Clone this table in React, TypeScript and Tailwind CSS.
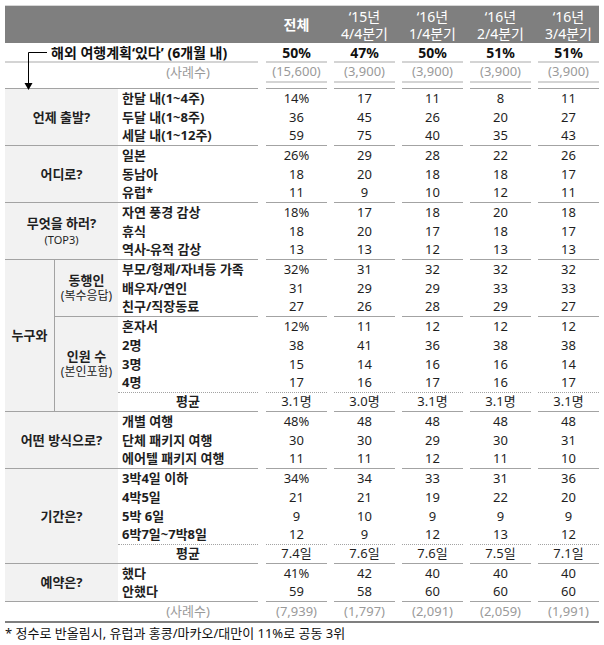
import React from "react";

type Line = "none" | "solid" | "dotted" | "light";

const lineCls = (l: Line) =>
  l === "solid"
    ? "border-b border-[#a3a3a3]"
    : l === "dotted"
    ? "border-b border-dotted border-[#a3a3a3]"
    : l === "light"
    ? "border-b-2 border-[#d4d4d4]"
    : "";

const heads = [
  { a: "‘15년", b: "4/4분기" },
  { a: "‘16년", b: "1/4분기" },
  { a: "‘16년", b: "2/4분기" },
  { a: "‘16년", b: "3/4분기" },
];

type RowDef = { label: string; v: string[]; center?: boolean };

const Row = ({ r, line }: { r: RowDef; line: Line }) => (
  <div className="flex h-[19px]">
    <div
      className={`w-[140px] flex items-center font-bold text-[13px] text-[#1f1f1f] ${
        r.center ? "justify-center" : "pl-[4px]"
      } ${lineCls(line)}`}
    >
      {r.label}
    </div>
    <div className="w-[8px]" />
    <div className="flex gap-[7px]">
      {r.v.map((x, i) => (
        <div
          key={i}
          className={`w-[61px] flex items-center justify-center text-[13px] text-[#1f1f1f] ${lineCls(line)}`}
        >
          {x}
        </div>
      ))}
    </div>
  </div>
);

const Rows = ({ rows, dottedBeforeLast }: { rows: RowDef[]; dottedBeforeLast?: boolean }) => (
  <div className="flex flex-col">
    {rows.map((r, i) => {
      let line: Line = "none";
      if (i === rows.length - 1) line = "solid";
      else if (dottedBeforeLast && i === rows.length - 2) line = "dotted";
      return <Row key={i} r={r} line={line} />;
    })}
  </div>
);

const Group = ({
  title,
  sub,
  rows,
  dotted,
}: {
  title: string;
  sub?: string;
  rows: RowDef[];
  dotted?: boolean;
}) => (
  <div className="flex">
    <div className="w-[113px] bg-[#f2f2f2] border-b border-[#a3a3a3] flex flex-col items-center justify-center text-[#1f1f1f]">
      <div className="font-bold text-[13px] leading-[17px]">{title}</div>
      {sub && <div className="text-[11px] leading-[15px]">{sub}</div>}
    </div>
    <Rows rows={rows} dottedBeforeLast={dotted} />
  </div>
);

const SubGroup = ({
  title,
  sub,
  rows,
  dotted,
}: {
  title: string;
  sub: string;
  rows: RowDef[];
  dotted?: boolean;
}) => (
  <div className="flex">
    <div className="w-[63px] bg-[#f2f2f2] border-b border-[#a3a3a3] flex flex-col items-center justify-center text-[#1f1f1f]">
      <div className="font-bold text-[13px] leading-[16px]">{title}</div>
      <div className="text-[12px] leading-[16px]">{sub}</div>
    </div>
    <Rows rows={rows} dottedBeforeLast={dotted} />
  </div>
);

export default function App() {
  return (
    <div className="relative w-[604px] h-[645px] bg-white px-[5px] pt-[5px] font-['Noto_Sans','Noto_Sans_CJK_KR',sans-serif]">
      <svg className="absolute left-0 top-0" width="60" height="95">
        <path d="M28.5 52.5H47M28.5 52.5V84" stroke="#000" strokeWidth="1" fill="none" />
        <path d="M24.5 83L32.5 83L28.5 90Z" fill="#000" />
      </svg>

      {/* header */}
      <div className="flex h-[38px] bg-[#7f7f7f] border-t border-[#d6d6d6] text-white">
        <div className="w-[261px]" />
        <div className="flex gap-[7px]">
          <div className="w-[61px] flex items-center justify-center font-bold text-[14px]">전체</div>
          {heads.map((h, i) => (
            <div key={i} className="w-[61px] flex flex-col items-center justify-center text-[14px] leading-[17px]">
              <div>{h.a}</div>
              <div>{h.b}</div>
            </div>
          ))}
        </div>
      </div>

      {/* 해외 여행계획 */}
      <div className="flex h-[20px]">
        <div className={`w-[253px] flex items-center pl-[46px] font-bold text-[14px] text-[#111] ${lineCls("light")}`}>
          해외 여행계획‘있다’ (6개월 내)
        </div>
        <div className="w-[8px]" />
        <div className="flex gap-[7px]">
          {["50%", "47%", "50%", "51%", "51%"].map((v, i) => (
            <div key={i} className={`w-[61px] flex items-center justify-center font-bold text-[14px] text-[#111] ${lineCls("light")}`}>
              {v}
            </div>
          ))}
        </div>
      </div>

      {/* 사례수 */}
      <div className="flex h-[20px]">
        <div className="w-[253px] flex items-center pl-[113px]">
          <div className="w-[140px] text-center text-[13px] text-[#9a9a9a]">(사례수)</div>
        </div>
        <div className="w-[8px]" />
        <div className="flex gap-[7px]">
          {["(15,600)", "(3,900)", "(3,900)", "(3,900)", "(3,900)"].map((v, i) => (
            <div key={i} className={`w-[61px] flex items-center justify-center text-[13px] text-[#9a9a9a] ${lineCls("light")}`}>
              {v}
            </div>
          ))}
        </div>
      </div>
      <div className="flex h-[6px]">
        <div className="w-[253px] border-b border-[#a3a3a3]" />
        <div className="w-[8px]" />
        <div className="flex gap-[7px]">
          {[0, 1, 2, 3, 4].map((i) => (
            <div key={i} className="w-[61px] border-b border-[#a3a3a3]" />
          ))}
        </div>
      </div>

      <Group
        title="언제 출발?"
        rows={[
          { label: "한달 내(1~4주)", v: ["14%", "17", "11", "8", "11"] },
          { label: "두달 내(1~8주)", v: ["36", "45", "26", "20", "27"] },
          { label: "세달 내(1~12주)", v: ["59", "75", "40", "35", "43"] },
        ]}
      />
      <Group
        title="어디로?"
        rows={[
          { label: "일본", v: ["26%", "29", "28", "22", "26"] },
          { label: "동남아", v: ["18", "20", "18", "18", "17"] },
          { label: "유럽*", v: ["11", "9", "10", "12", "11"] },
        ]}
      />
      <Group
        title="무엇을 하러?"
        sub="(TOP3)"
        rows={[
          { label: "자연 풍경 감상", v: ["18%", "17", "18", "20", "18"] },
          { label: "휴식", v: ["18", "20", "17", "18", "17"] },
          { label: "역사-유적 감상", v: ["13", "13", "12", "13", "13"] },
        ]}
      />

      {/* 누구와 */}
      <div className="flex">
        <div className="w-[50px] bg-[#f2f2f2] border-b border-r border-[#a3a3a3] flex items-center justify-center font-bold text-[13px] text-[#1f1f1f]">
          누구와
        </div>
        <div className="flex flex-col">
          <SubGroup
            title="동행인"
            sub="(복수응답)"
            rows={[
              { label: "부모/형제/자녀등 가족", v: ["32%", "31", "32", "32", "32"] },
              { label: "배우자/연인", v: ["31", "29", "29", "33", "33"] },
              { label: "친구/직장동료", v: ["27", "26", "28", "29", "27"] },
            ]}
          />
          <SubGroup
            title="인원 수"
            sub="(본인포함)"
            dotted
            rows={[
              { label: "혼자서", v: ["12%", "11", "12", "12", "12"] },
              { label: "2명", v: ["38", "41", "36", "38", "38"] },
              { label: "3명", v: ["15", "14", "16", "16", "14"] },
              { label: "4명", v: ["17", "16", "17", "16", "17"] },
              { label: "평균", v: ["3.1명", "3.0명", "3.1명", "3.1명", "3.1명"], center: true },
            ]}
          />
        </div>
      </div>

      <Group
        title="어떤 방식으로?"
        rows={[
          { label: "개별 여행", v: ["48%", "48", "48", "48", "48"] },
          { label: "단체 패키지 여행", v: ["30", "30", "29", "30", "31"] },
          { label: "에어텔 패키지 여행", v: ["11", "11", "12", "11", "10"] },
        ]}
      />
      <Group
        title="기간은?"
        dotted
        rows={[
          { label: "3박4일 이하", v: ["34%", "34", "33", "31", "36"] },
          { label: "4박5일", v: ["21", "21", "19", "22", "20"] },
          { label: "5박 6일", v: ["9", "10", "9", "9", "9"] },
          { label: "6박7일~7박8일", v: ["12", "9", "12", "13", "12"] },
          { label: "평균", v: ["7.4일", "7.6일", "7.6일", "7.5일", "7.1일"], center: true },
        ]}
      />
      <Group
        title="예약은?"
        rows={[
          { label: "했다", v: ["41%", "42", "40", "40", "40"] },
          { label: "안했다", v: ["59", "58", "60", "60", "60"] },
        ]}
      />

      {/* bottom 사례수 */}
      <div className="flex h-[21px] border-b-2 border-[#7f7f7f]">
        <div className="w-[253px] flex items-center pl-[113px]">
          <div className="w-[140px] text-center text-[13px] text-[#9a9a9a]">(사례수)</div>
        </div>
        <div className="w-[8px]" />
        <div className="flex gap-[7px]">
          {["(7,939)", "(1,797)", "(2,091)", "(2,059)", "(1,991)"].map((v, i) => (
            <div key={i} className="w-[61px] flex items-center justify-center text-[13px] text-[#9a9a9a]">
              {v}
            </div>
          ))}
        </div>
      </div>

      <div className="mt-[1px] text-[13px] leading-[18px] text-[#111]">
        * 정수로 반올림시, 유럽과 홍콩/마카오/대만이 11%로 공동 3위
      </div>
    </div>
  );
}
